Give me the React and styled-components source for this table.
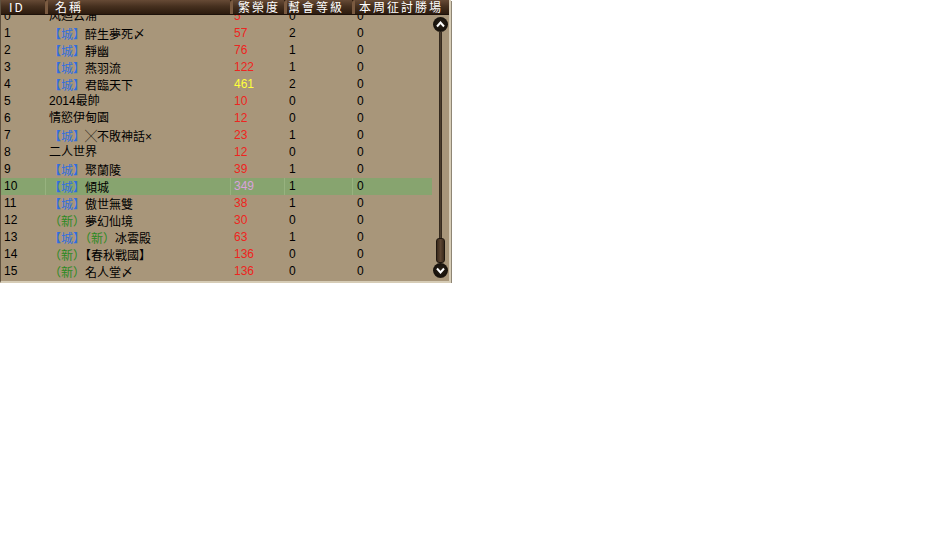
import React from "react";
import styled, { createGlobalStyle } from "styled-components";

const Global = createGlobalStyle`
  html, body { margin: 0; padding: 0; background: #ffffff; }
  body { font-family: "Liberation Sans", "Noto Sans CJK TC", sans-serif; }
`;

const COLS = "44px 185px 54px 68px 1fr";

const Panel = styled.div`
  width: 451px;
  height: 283px;
  box-sizing: border-box;
  display: flex;
  flex-direction: column;
  background: #a8967a;
  border-left: 1px solid #5e503e;
  border-right: 2px solid #d6ccb6;
  border-bottom: 2px solid #d6ccb6;
  box-shadow: 1px 1px 0 #8e8574;
  overflow: hidden;
`;

const Header = styled.div`
  display: grid;
  grid-template-columns: ${COLS};
  height: 15px;
  box-sizing: border-box;
  border-bottom: 1px solid #1c110a;
  background: #2a1a0e;
`;

const HeadCell = styled.div`
  box-sizing: border-box;
  padding-left: ${(p) => p.$pad}px;
  font-family: "Noto Sans CJK TC", "Liberation Sans", sans-serif;
  font-size: 12px;
  letter-spacing: 2px;
  line-height: 14px;
  color: #ffffff;
  white-space: nowrap;
  overflow: hidden;
  background: linear-gradient(#664a35 0%, #46301f 45%, #2c1b0e 100%);
  border-left: ${(p) => (p.$first ? "0" : "3px solid #7a5a40")};
  border-radius: ${(p) => (p.$first ? "0" : "3px 0 0 0")};
`;

const Body = styled.div`
  flex: 1;
  display: flex;
  min-height: 0;
`;

const List = styled.div`
  flex: 1;
  overflow: hidden;
`;

const Rows = styled.div`
  margin-top: -7px;
`;

const Row = styled.div`
  display: grid;
  grid-template-columns: ${COLS};
  height: 17px;
  line-height: 17px;
  font-size: 12px;
  color: #000000;
  background: ${(p) => (p.$active ? "#87a46f" : "transparent")};
`;

const Cell = styled.div`
  box-sizing: border-box;
  padding-left: ${(p) => p.$pad || 3}px;
  white-space: nowrap;
  overflow: hidden;
  color: ${(p) => p.$color || "inherit"};
  border-left: ${(p) => (p.$active && !p.$first ? "1px solid #97b27f" : "1px solid transparent")};
  font-family: "Liberation Sans", "Noto Sans CJK TC", sans-serif;
`;

const Tag = styled.span`
  color: ${(p) => (p.$kind === "city" ? "#2f6ee0" : "#2b8a22")};
  font-family: "Noto Sans CJK TC", sans-serif;
`;

const Name = styled.span`
  font-family: "Liberation Sans", "Noto Sans CJK TC", sans-serif;
`;

const Scroll = styled.div`
  width: 17px;
  display: flex;
  flex-direction: column;
  align-items: center;
  padding: 2px 0 3px;
  box-sizing: border-box;
`;

const Arrow = styled.div`
  width: 15px;
  height: 15px;
  border-radius: 50%;
  flex: none;
  background: radial-gradient(circle at 50% 45%, #2a2218 0%, #17120c 60%, #3c3022 100%);
  display: flex;
  align-items: center;
  justify-content: center;
`;

const Track = styled.div`
  flex: 1;
  width: 3px;
  background: linear-gradient(90deg, #2a2016, #4a3c2c, #2a2016);
`;

const Thumb = styled.div`
  width: 9px;
  height: 25px;
  flex: none;
  box-sizing: border-box;
  border-radius: 3px;
  border: 1px solid #1f170f;
  background: linear-gradient(90deg, #3a2a1c, #5c4532 50%, #3a2a1c);
`;

const Chevron = ({ down }) => (
  <svg width="9" height="7" viewBox="0 0 9 7">
    <path
      d={down ? "M1 1.5 L4.5 5.5 L8 1.5" : "M1 5.5 L4.5 1.5 L8 5.5"}
      fill="none"
      stroke="#ffffff"
      strokeWidth="2"
      strokeLinejoin="miter"
    />
  </svg>
);

const city = { kind: "city", t: "【城】" };
const nw = { kind: "new", t: "（新）" };

const data = [
  { id: 0, name: ["风迴云涌"], p: "5", lv: 0 },
  { id: 1, name: [city, "醉生夢死〆"], p: "57", lv: 2 },
  { id: 2, name: [city, "靜幽"], p: "76", lv: 1 },
  { id: 3, name: [city, "燕羽流"], p: "122", lv: 1 },
  { id: 4, name: [city, "君臨天下"], p: "461", pc: "#ffff3c", lv: 2 },
  { id: 5, name: ["2014最帥"], p: "10", lv: 0 },
  { id: 6, name: ["情慾伊甸園"], p: "12", lv: 0 },
  { id: 7, name: [city, "╳不敗神話×"], p: "23", lv: 1 },
  { id: 8, name: ["二人世界"], p: "12", lv: 0 },
  { id: 9, name: [city, "聚蘭陵"], p: "39", lv: 1 },
  { id: 10, name: [city, "傾城"], p: "349", pc: "#d9a2dc", lv: 1, active: true },
  { id: 11, name: [city, "傲世無雙"], p: "38", lv: 1 },
  { id: 12, name: [nw, "夢幻仙境"], p: "30", lv: 0 },
  { id: 13, name: [city, nw, "冰雲殿"], p: "63", lv: 1 },
  { id: 14, name: [nw, "【春秋戰國】"], p: "136", lv: 0 },
  { id: 15, name: [nw, "名人堂〆"], p: "136", lv: 0 },
];

const heads = [
  { t: "ID", pad: 8, first: true },
  { t: "名稱", pad: 7 },
  { t: "繁榮度", pad: 5 },
  { t: "幫會等級", pad: 1 },
  { t: "本周征討勝場", pad: 4 },
];

export default function App() {
  return (
    <>
      <Global />
      <Panel>
        <Header>
          {heads.map((h) => (
            <HeadCell key={h.t} $pad={h.pad} $first={h.first}>
              {h.t}
            </HeadCell>
          ))}
        </Header>
        <Body>
          <List>
            <Rows>
              {data.map((r) => (
                <Row key={r.id} $active={r.active}>
                  <Cell $pad={2} $first $active={r.active}>{r.id}</Cell>
                  <Cell $active={r.active}>
                    {r.name.map((part, i) =>
                      typeof part === "string" ? (
                        <Name key={i}>{part}</Name>
                      ) : (
                        <Tag key={i} $kind={part.kind}>
                          {part.t}
                        </Tag>
                      )
                    )}
                  </Cell>
                  <Cell $color={r.pc || "#ee2420"} $active={r.active}>{r.p}</Cell>
                  <Cell $pad={4} $active={r.active}>{r.lv}</Cell>
                  <Cell $pad={4} $active={r.active}>0</Cell>
                </Row>
              ))}
            </Rows>
          </List>
          <Scroll>
            <Arrow>
              <Chevron />
            </Arrow>
            <Track />
            <Thumb />
            <Arrow>
              <Chevron down />
            </Arrow>
          </Scroll>
        </Body>
      </Panel>
    </>
  );
}
